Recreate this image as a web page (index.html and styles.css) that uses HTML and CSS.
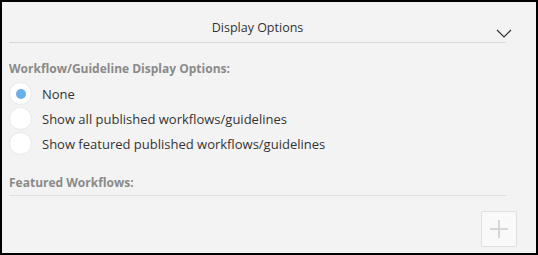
FILE: index.html
```html
<!DOCTYPE html>
<html lang="en">
<head>
    <meta charset="UTF-8">
    <title>Display Options</title>
    <link rel="stylesheet" href="styles.css">
</head>
<body>
    <div class="panel">
        <div class="header">
            <span class="title">Display Options</span>
            <svg class="chevron" width="16" height="9" viewBox="0 0 16 9">
                <path d="M1 1 L8 8 L15 1" fill="none" stroke="#333" stroke-width="1.2"/>
            </svg>
        </div>

        <div class="section-label">Workflow/Guideline Display Options:</div>
        <div class="options">
            <label class="option"><span class="radio checked"></span>None</label>
            <label class="option"><span class="radio"></span>Show all published workflows/guidelines</label>
            <label class="option"><span class="radio"></span>Show featured published workflows/guidelines</label>
        </div>

        <div class="section-label featured">Featured Workflows:</div>
        <div class="actions">
            <button class="add-btn">
                <svg width="20" height="20" viewBox="0 0 20 20">
                    <path d="M10 1 V19 M1 10 H19" stroke="#d6d6d6" stroke-width="2"/>
                </svg>
            </button>
        </div>
    </div>
</body>
</html>
```

FILE: styles.css
```css
body {
    margin: 0;
    font-family: 'Open Sans', 'Noto Sans', sans-serif;
    color: #333;
}

.panel {
    width: 538px;
    height: 255px;
    box-sizing: border-box;
    border: 2px solid #000;
    background-color: #f3f3f3;
    padding: 0 30px 0 7px;
}

.header {
    position: relative;
    height: 40px;
    border-bottom: 1px solid #d8d8d8;
    display: flex;
    justify-content: center;
    align-items: center;
}

.title {
    font-size: 12.5px;
    color: #333;
    padding-top: 10px;
}

.chevron {
    position: absolute;
    right: -6px;
    top: 27px;
}

.section-label {
    font-size: 12px;
    font-weight: bold;
    color: #8a8a8a;
    margin-top: 17px;
    line-height: 18px;
}

.options {
    display: flex;
    flex-direction: column;
    margin-top: 3px;
}

.option {
    display: flex;
    align-items: center;
    height: 25px;
    font-size: 13px;
    color: #333;
}

.radio {
    width: 21px;
    height: 21px;
    border-radius: 50%;
    background-color: #fff;
    box-shadow: 0 0 0 1px #ebebeb;
    margin: 0 11px 0 1px;
    display: flex;
    justify-content: center;
    align-items: center;
}

.radio.checked::after {
    content: "";
    width: 10px;
    height: 10px;
    border-radius: 50%;
    background-color: #6aaeea;
}

.featured {
    margin-top: 18px;
    padding-bottom: 3px;
    border-bottom: 1px solid #dedede;
}

.actions {
    display: flex;
    justify-content: flex-end;
    padding-top: 15px;
    margin-right: -11px;
}

.add-btn {
    width: 36px;
    height: 36px;
    border: 1px solid #e0e0e0;
    border-radius: 2px;
    background-color: #f9f9f9;
    display: flex;
    justify-content: center;
    align-items: center;
    padding: 0;
}
```
